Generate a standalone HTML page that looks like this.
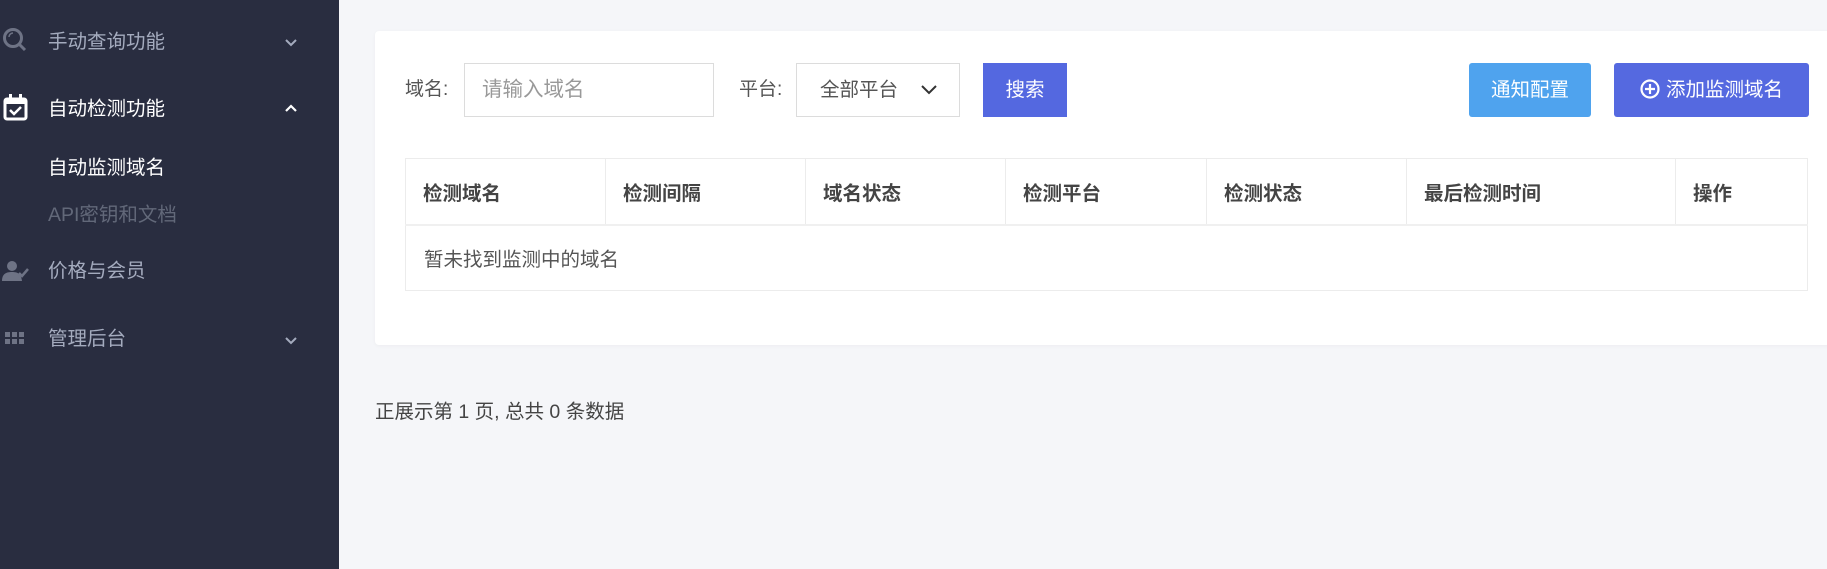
<!DOCTYPE html>
<html><head><meta charset="utf-8"><style>
*{box-sizing:border-box;margin:0;padding:0}
body{width:1827px;height:569px;overflow:hidden;background:#f5f6f9;font-family:"Liberation Sans","Noto Sans CJK SC",sans-serif;position:relative}
.side{position:absolute;left:0;top:0;width:339px;height:569px;background:#292d40}
.mi{position:absolute;left:48px;font-size:19.5px;color:#a4abbe;line-height:24px}
.ic{position:absolute;left:2px}
.chev{position:absolute;left:284px}
.card{position:absolute;left:375px;top:31px;width:1460px;height:314px;background:#fff;border-radius:4px;box-shadow:0 1px 4px rgba(0,0,0,.04)}
.lbl{position:absolute;font-size:19px;color:#555;line-height:24px}
.box{position:absolute;border:1px solid #dcdcdc;background:#fff;font-size:19.5px;line-height:52px}
.btn{position:absolute;color:#fff;font-size:19.5px;text-align:center;line-height:54px;border-radius:3px}
table{position:absolute;left:405px;top:158px;width:1403px;border-collapse:collapse}
td{border:1px solid #ececec;font-size:19.5px;color:#555;padding-left:18px}
th{border:1px solid #ececec;border-bottom:2px solid #f0f0f0;font-size:19.5px;font-weight:bold;color:#444;text-align:left;padding-left:17px;height:66px}
</style></head><body>
<div class="side">
 <svg class="ic" style="top:27px" width="26" height="26" viewBox="0 0 26 26"><circle cx="11" cy="11" r="8.5" fill="none" stroke="#6e7385" stroke-width="3"/><path d="M17 17l6 6" stroke="#6e7385" stroke-width="3"/><path d="M7 10a4 4 0 0 1 4-4" stroke="#6e7385" stroke-width="1.5" fill="none"/></svg>
 <div class="mi" style="top:30px">手动查询功能</div>
 <svg class="chev" style="top:35px" width="14" height="14" viewBox="0 0 14 14"><path d="M2 5l5 5 5-5" stroke="#a4abbe" stroke-width="2" fill="none"/></svg>
 <svg class="ic" style="top:93px" width="26" height="28" viewBox="0 0 26 28"><rect x="3" y="6" width="21" height="20" rx="2" fill="none" stroke="#fff" stroke-width="3"/><rect x="3" y="6" width="21" height="5" fill="#fff"/><rect x="7" y="1" width="3" height="6" fill="#fff"/><rect x="17" y="1" width="3" height="6" fill="#fff"/><path d="M8 17l4 4 7-7" stroke="#fff" stroke-width="2.5" fill="none"/></svg>
 <div class="mi" style="top:97px;color:#fff">自动检测功能</div>
 <svg class="chev" style="top:101px" width="14" height="14" viewBox="0 0 14 14"><path d="M2 10l5-5 5 5" stroke="#fff" stroke-width="2.2" fill="none"/></svg>
 <div class="mi" style="top:156px;color:#fff">自动监测域名</div>
 <div class="mi" style="top:203px;color:#626879">API密钥和文档</div>
 <svg class="ic" style="top:260px" width="28" height="22" viewBox="0 0 28 22"><circle cx="10" cy="6" r="5" fill="#6e7385"/><path d="M0 21c0-7 4-9 10-9s9 2 10 9z" fill="#6e7385"/><path d="M17 13l3 3 6-7" stroke="#6e7385" stroke-width="2.5" fill="none"/></svg>
 <div class="mi" style="top:259px">价格与会员</div>
 <svg class="ic" style="top:330px" width="26" height="18" viewBox="0 0 26 18"><g fill="#6e7385"><rect x="3" y="2" width="5" height="5"/><rect x="10" y="2" width="5" height="5"/><rect x="17" y="2" width="5" height="5"/><rect x="3" y="9" width="5" height="5"/><rect x="10" y="9" width="5" height="5"/><rect x="17" y="9" width="5" height="5"/></g></svg>
 <div class="mi" style="top:327px">管理后台</div>
 <svg class="chev" style="top:333px" width="14" height="14" viewBox="0 0 14 14"><path d="M2 5l5 5 5-5" stroke="#a4abbe" stroke-width="2" fill="none"/></svg>
</div>
<div class="card"></div>
<div class="lbl" style="left:405px;top:78px">域名:</div>
<div class="box" style="left:464px;top:63px;width:250px;height:54px;padding-left:17px;color:#999;font-size:20.5px">请输入域名</div>
<div class="lbl" style="left:739px;top:78px">平台:</div>
<div class="box" style="left:796px;top:63px;width:164px;height:54px;padding-left:23px;color:#555">全部平台
 <svg style="position:absolute;right:22px;top:20px" width="16" height="12" viewBox="0 0 16 12"><path d="M1 2l7 7 7-7" stroke="#333" stroke-width="2" fill="none"/></svg></div>
<div class="btn" style="left:983px;top:63px;width:84px;background:#5468e0;border-radius:0">搜索</div>
<div class="btn" style="left:1469px;top:63px;width:122px;background:#4fa3ee">通知配置</div>
<div class="btn" style="left:1614px;top:63px;width:195px;background:#5569e0"><svg style="vertical-align:-3px;margin-right:6px" width="20" height="20" viewBox="0 0 20 20"><circle cx="10" cy="10" r="8.5" fill="none" stroke="#fff" stroke-width="2.2"/><path d="M10 5v10M5 10h10" stroke="#fff" stroke-width="2.2"/></svg>添加监测域名</div>
<table>
<tr><th style="width:200px">检测域名</th><th style="width:200px">检测间隔</th><th style="width:200px">域名状态</th><th style="width:201px">检测平台</th><th style="width:200px">检测状态</th><th style="width:269px">最后检测时间</th><th>操作</th></tr>
<tr><td colspan="7" style="height:66px">暂未找到监测中的域名</td></tr>
</table>
<div class="lbl" style="left:375px;top:400px;color:#444;font-size:19.5px">正展示第 1 页, 总共 0 条数据</div>
</body></html>
